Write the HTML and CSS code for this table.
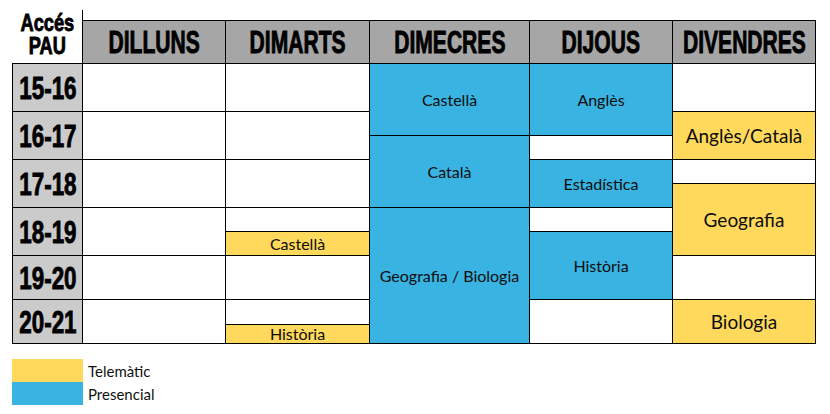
FILE: index.html
```html
<!DOCTYPE html>
<html lang="ca">
<head>
<meta charset="utf-8">
<title>Horari Accés PAU</title>
<link rel="stylesheet" href="styles.css">
</head>
<body>
<div class="page">
  <div class="timetable">
    <div class="corner"><span class="cond corner-text">Accés<br>PAU</span></div>
    <div class="head"><span class="cond">DILLUNS</span></div>
    <div class="head"><span class="cond">DIMARTS</span></div>
    <div class="head"><span class="cond">DIMECRES</span></div>
    <div class="head"><span class="cond">DIJOUS</span></div>
    <div class="head"><span class="cond">DIVENDRES</span></div>

    <div class="time r-2-4"><span class="cond">15-16</span></div>
    <div class="time r-4-6"><span class="cond">16-17</span></div>
    <div class="time r-6-8"><span class="cond">17-18</span></div>
    <div class="time r-8-10"><span class="cond">18-19</span></div>
    <div class="time r-10-12"><span class="cond">19-20</span></div>
    <div class="time r-12-14"><span class="cond">20-21</span></div>

    <div class="cell c2 r-2-4"></div>
    <div class="cell c2 r-4-6"></div>
    <div class="cell c2 r-6-8"></div>
    <div class="cell c2 r-8-10"></div>
    <div class="cell c2 r-10-12"></div>
    <div class="cell c2 r-12-14"></div>

    <div class="cell c3 r-2-4"></div>
    <div class="cell c3 r-4-6"></div>
    <div class="cell c3 r-6-8"></div>
    <div class="cell c3 r-8-9"></div>
    <div class="cell c3 r-9-10 tele">Castellà</div>
    <div class="cell c3 r-10-12"></div>
    <div class="cell c3 r-12-13"></div>
    <div class="cell c3 r-13-14 tele clip">Història</div>

    <div class="cell c4 r-2-5 pres">Castellà</div>
    <div class="cell c4 r-5-8 pres">Català</div>
    <div class="cell c4 r-8-14 pres">Geografia / Biologia</div>

    <div class="cell c5 r-2-5 pres">Anglès</div>
    <div class="cell c5 r-5-6"></div>
    <div class="cell c5 r-6-8 pres">Estadística</div>
    <div class="cell c5 r-8-9"></div>
    <div class="cell c5 r-9-12 pres">Història</div>
    <div class="cell c5 r-12-14"></div>

    <div class="cell c6 r-2-4"></div>
    <div class="cell c6 r-4-6 tele big">Anglès/Català</div>
    <div class="cell c6 r-6-7"></div>
    <div class="cell c6 r-7-10 tele big">Geografia</div>
    <div class="cell c6 r-10-12"></div>
    <div class="cell c6 r-12-14 tele big">Biologia</div>
  </div>

  <div class="legend">
    <div class="legend-row"><span class="swatch tele"></span><span class="legend-label">Telemàtic</span></div>
    <div class="legend-row"><span class="swatch pres"></span><span class="legend-label">Presencial</span></div>
  </div>
</div>
</body>
</html>
```

FILE: styles.css
```css
* { box-sizing: border-box; }

html, body {
  margin: 0;
  padding: 0;
  background: #ffffff;
}

.page {
  padding: 10px 0 0 12px;
  font-family: Lato, "Noto Sans", sans-serif;
  color: #111;
}

.timetable {
  display: grid;
  grid-template-columns: 71px 143px 144px 160px 143px 143px;
  grid-template-rows: 54px repeat(8, 24px) 22px 22px 25px 19px;
  width: 804px;
}

.cond {
  display: inline-block;
  white-space: nowrap;
  transform: scaleX(0.68);
  transform-origin: center;
  font-family: "Liberation Sans", Arial, sans-serif;
  font-weight: bold;
  color: #000;
  -webkit-text-stroke: 0.9px #000;
}

.corner {
  grid-column: 1;
  grid-row: 1;
  border-right: 1px solid #000;
  border-bottom: 1px solid #000;
  display: flex;
  justify-content: center;
  align-items: flex-start;
  padding-top: 1px;
  font-size: 24px;
}

.corner-text {
  display: block;
  text-align: center;
  line-height: 23px;
  transform: scaleX(0.76);
}

.head {
  grid-row: 1;
  margin-top: 10px;
  background: #a6a6a6;
  border-top: 1px solid #000;
  border-right: 1px solid #000;
  border-bottom: 1px solid #000;
  display: flex;
  align-items: center;
  justify-content: center;
  font-size: 31px;
  line-height: 32px;
  padding-top: 1px;
  overflow: hidden;
}

.time {
  grid-column: 1;
  background: #cbcbcb;
  border-left: 1px solid #000;
  border-right: 1px solid #000;
  border-bottom: 1px solid #000;
  display: flex;
  align-items: center;
  justify-content: center;
  font-size: 32px;
  line-height: 32px;
  padding-top: 1px;
  overflow: hidden;
}

.time .cond { transform: scaleX(0.7); }

.cell {
  background: #ffffff;
  border-right: 1px solid #000;
  border-bottom: 1px solid #000;
  display: flex;
  align-items: center;
  justify-content: center;
  font-size: 16px;
  line-height: 18px;
  color: #0d0d0d;
  white-space: nowrap;
}

.cell.big { font-size: 19px; }
.cell.clip { overflow: hidden; align-items: flex-end; }

.tele { background: #ffd95c; }
.pres { background: #39b3e2; }

.c2 { grid-column: 2; }
.c3 { grid-column: 3; }
.c4 { grid-column: 4; }
.c5 { grid-column: 5; }
.c6 { grid-column: 6; }

.r-2-4 { grid-row: 2 / 4; }
.r-4-6 { grid-row: 4 / 6; }
.r-6-8 { grid-row: 6 / 8; }
.r-8-10 { grid-row: 8 / 10; }
.r-10-12 { grid-row: 10 / 12; }
.r-12-14 { grid-row: 12 / 14; }
.r-8-9 { grid-row: 8 / 9; }
.r-9-10 { grid-row: 9 / 10; }
.r-12-13 { grid-row: 12 / 13; }
.r-13-14 { grid-row: 13 / 14; }
.r-2-5 { grid-row: 2 / 5; }
.r-5-8 { grid-row: 5 / 8; }
.r-8-14 { grid-row: 8 / 14; }
.r-5-6 { grid-row: 5 / 6; }
.r-9-12 { grid-row: 9 / 12; }
.r-6-7 { grid-row: 6 / 7; }
.r-7-10 { grid-row: 7 / 10; }

.legend {
  margin-top: 15px;
  display: flex;
  flex-direction: column;
}

.legend-row {
  display: flex;
  align-items: center;
  height: 23px;
}

.swatch {
  display: block;
  width: 71px;
  height: 23px;
}

.legend-label {
  margin-left: 5px;
  font-size: 15px;
  color: #111;
}
```
